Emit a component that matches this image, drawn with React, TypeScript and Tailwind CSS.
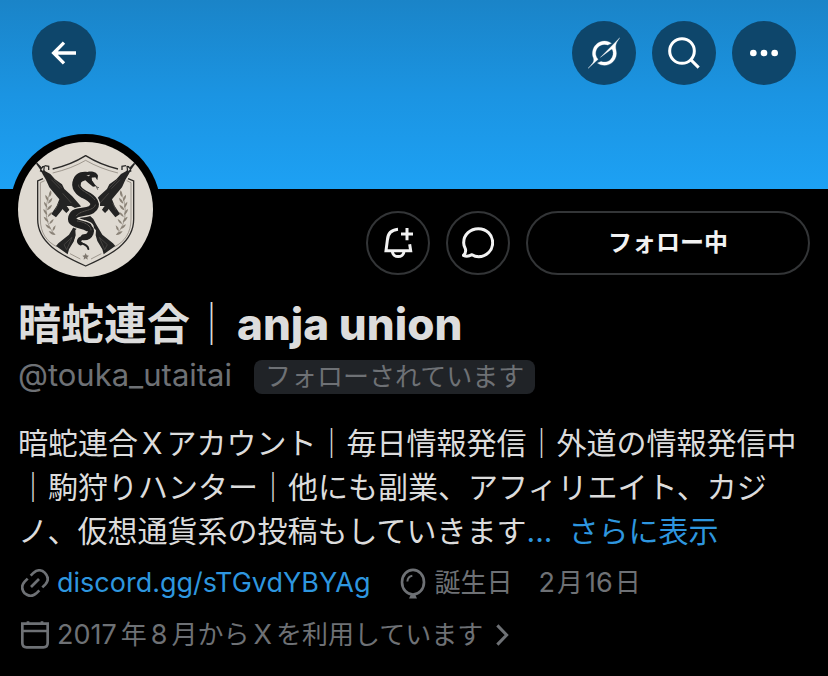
import type { ReactNode } from "react";

function Rifle() {
  return (
    <g fill="#242424">
      <path d="M75 97 L79 95 L106 124 L121 132 L135 148 L156 163 L163 177 L186 198 L213 229 L206 240 L184 228 L170 228 L178 239 L169 249 L158 237 L151 246 L138 262 L124 252 L140 228 L148 208 L133 190 L118 172 L107 148 L98 133 L93 122 Z" />
      <path d="M89 124 L97 108 L105 107 L102 130 Z" />
      <path d="M213 232 L250 267 L258 282 L277 314 L309 340 L316 348 L281 373 L277 358 L262 333 L257 316 L258 301 L243 284 L222 266 L205 246 Z" />
      <path d="M94 118 L101 111 L99 124 Z" fill="#dfdad2" />
      <path d="M160 239 L172 233 L175 241 L168 246 Z" fill="none" stroke="#242424" strokeWidth="2" />
      <path d="M124 149 L150 176 M131 148 L156 173 M158 190 L184 219 M146 219 L136 240 M268 322 L292 344 L284 359 Z" fill="none" stroke="#55524e" strokeWidth="2" />
    </g>
  );
}

function Laurel() {
  return (
    <g fill="#8b8378">
      <path d="M121 187 C101 230 104 282 135 314" fill="none" stroke="#8b8378" strokeWidth="2" />
      <path d="M122 181 Q128 191 119 201 Q114 192 122 181 Z" />
      <path d="M106 194 Q117 202 115 214 Q105 206 106 194 Z" />
      <path d="M127 203 Q126 216 114 221 Q115 209 127 203 Z" />
      <path d="M102 215 Q112 221 112 233 Q102 227 102 215 Z" />
      <path d="M126 224 Q124 236 111 241 Q112 229 126 224 Z" />
      <path d="M100 237 Q111 242 112 255 Q101 249 100 237 Z" />
      <path d="M127 246 Q124 257 113 262 Q114 250 127 246 Z" />
      <path d="M101 260 Q113 264 116 277 Q104 272 101 260 Z" />
      <path d="M131 267 Q129 278 118 283 Q119 272 131 267 Z" />
      <path d="M106 283 Q119 286 123 297 Q110 295 106 283 Z" />
      <path d="M137 286 Q137 297 128 304 Q126 292 137 286 Z" />
      <path d="M116 304 Q129 303 136 315 Q123 316 116 304 Z" />
    </g>
  );
}

function Emblem() {
  return (
    <svg viewBox="24 36 405 405" className="size-full" role="img" aria-label="暗蛇連合">
      <rect x="24" y="36" width="405" height="405" fill="#dfdad2" />
      <g fill="none" stroke="#2b2a29" strokeWidth="4">
        <path d="M128 117 Q182 105 227 77 Q272 105 324 117" />
        <path d="M116 120 L116 109 L104 107 M336 120 L336 109 L348 107" />
        <path d="M99 146 L83 153 L83 268 C83 338 150 374 227 408 C304 374 371 338 371 268 L371 153 L354 146" />
      </g>
      <g fill="none" stroke="#7d766d" strokeWidth="2">
        <path d="M128 129 Q184 116 227 91 Q270 116 324 129" />
        <path d="M104 152 L91 158 L91 267 C91 310 111 335 140 350 M350 152 L363 158 L363 267 C363 310 343 335 314 350 M180 371 L211 387 M274 371 L243 387" />
      </g>
      <Laurel />
      <g transform="translate(454 0) scale(-1 1)">
        <Laurel />
      </g>
      <Rifle />
      <g transform="translate(454 0) scale(-1 1)">
        <Rifle />
      </g>
      <g fill="none" strokeLinecap="round" strokeLinejoin="round">
        <path d="M228 289 C257 300 240 322 222 324 C200 328 198 340 212 343 C226 345 234 350 235 358" stroke="#dfdad2" strokeWidth="22" />
        <path d="M207 145 C189 165 200 181 222 193 C252 207 264 224 244 239 C223 251 195 240 187 262 C181 282 217 282 235 292" stroke="#dfdad2" strokeWidth="33" />
        <path d="M208 144 C190 164 201 181 222 193 C252 207 264 224 244 239 C223 251 195 240 187 262 C181 282 217 282 233 291" stroke="#202020" strokeWidth="25" />
        <path d="M230 288 C254 300 240 321 222 322" stroke="#202020" strokeWidth="18" />
        <path d="M224 322 C206 325 202 336 212 340" stroke="#202020" strokeWidth="12" />
        <path d="M212 340 C226 343 234 349 235 357" stroke="#202020" strokeWidth="6" />
        <path d="M205 164 C205 180 242 190 255 211 M256 225 C248 245 213 238 198 259 M202 273 C220 275 244 286 243 301" stroke="#77716a" strokeWidth="2" strokeDasharray="2 3" />
      </g>
      <path d="M190 151 C193 132 211 123 232 126 C246 122 261 127 264 137 L262 151 L256 142 L245 143 L246 151 L258 169 L249 170 L235 159 L226 151 L211 157 L202 168 L190 169 Z" fill="#202020" />
      <path d="M246 143 L253 145 L254 160 L247 151 Z" fill="#dfdad2" />
      <path d="M229 137 L240 134 L237 139 Z" fill="#dfdad2" />
      <path d="M249 163 C253 169 257 162 260 171 L267 173 M260 171 L263 179" fill="none" stroke="#202020" strokeWidth="2" />
      <path d="M227 369 L230 376 L237 377 L232 382 L233 389 L227 385 L221 389 L222 382 L217 377 L224 376 Z" fill="#7d766d" />
    </svg>
  );
}

function HeaderButton({ label, children }: { label: string; children: ReactNode }) {
  return (
    <button type="button" aria-label={label} className="flex size-16 items-center justify-center rounded-full bg-[#0e466b] text-white">
      {children}
    </button>
  );
}

function OutlineButton({ label, children }: { label: string; children: ReactNode }) {
  return (
    <button type="button" aria-label={label} className="flex size-16 shrink-0 items-center justify-center rounded-full border-2 border-[#333537] text-[#f2f2f2]">
      {children}
    </button>
  );
}

export default function App() {
  return (
    <main lang="ja" className="min-h-screen bg-black font-[Inter,'Noto_Sans_CJK_JP',sans-serif] text-[#dcdcdc]">
      <header className="flex h-[189px] items-start gap-4 bg-linear-to-b from-[#1a84c8] via-[#1b94e2] to-[#1da1f4] px-8 pt-[21px]">
        <HeaderButton label="戻る">
          <svg viewBox="0 0 96 96" className="size-8" fill="none" stroke="currentColor" strokeWidth="10">
            <path d="M84 48 H17 M48 17 L17 48 L48 79" />
          </svg>
        </HeaderButton>
        <div className="grow" />
        <HeaderButton label="Grok">
          <svg viewBox="0 0 33 32" className="size-8" fill="currentColor" stroke="currentColor" strokeWidth="0.3">
            <path d="M12.745 20.54l10.97-8.19c.539-.4 1.307-.244 1.564.38 1.349 3.288.746 7.241-1.938 9.955-2.683 2.714-6.417 3.31-9.83 1.954l-3.728 1.745c5.347 3.697 11.84 2.782 15.898-1.324 3.219-3.255 4.216-7.692 3.284-11.693l.008.009c-1.351-5.878.332-8.227 3.782-13.031L33 0l-4.54 4.59v-.014L12.743 20.544M10.48 22.531c-3.837-3.707-3.175-9.446.1-12.755 2.42-2.449 6.388-3.448 9.852-1.979l3.72-1.737c-.67-.49-1.53-1.017-2.515-1.387-4.455-1.854-9.789-.931-13.41 2.728-3.483 3.523-4.579 8.94-2.697 13.561 1.405 3.454-.899 5.898-3.22 8.364C1.389 30.2.564 31.074 0 32l10.478-9.466" />
          </svg>
        </HeaderButton>
        <HeaderButton label="検索">
          <svg viewBox="0 0 96 96" className="size-8" fill="none" stroke="currentColor" strokeWidth="9">
            <circle cx="42" cy="42" r="37" />
            <path d="M68 68 L92 92" />
          </svg>
        </HeaderButton>
        <HeaderButton label="その他">
          <svg viewBox="0 0 96 96" className="size-8" fill="currentColor">
            <circle cx="16" cy="48" r="10" />
            <circle cx="48" cy="48" r="10" />
            <circle cx="80" cy="48" r="10" />
          </svg>
        </HeaderButton>
      </header>

      <section className="px-[18px]">
        <div className="flex items-start justify-between">
          <div className="-mt-[55px] -ml-2 size-[151px] shrink-0 overflow-hidden rounded-full bg-black p-2">
            <div className="size-full overflow-hidden rounded-full">
              <Emblem />
            </div>
          </div>
          <div className="flex gap-4 pt-[22px]">
            <OutlineButton label="通知を追加">
              <svg viewBox="0 0 96 96" className="size-8 shrink-0" fill="none" stroke="currentColor" strokeWidth="9">
                <path d="M48 7 C26 9 17 22 16 40 L12 71 H86 L83 52" />
                <path d="M31 73 C33 94 64 94 66 73" />
                <path d="M75 3 V40 M57 21 H93" />
              </svg>
            </OutlineButton>
            <OutlineButton label="メッセージ">
              <svg viewBox="0 0 96 96" className="size-8 shrink-0" fill="none" stroke="currentColor" strokeWidth="9" strokeLinejoin="round">
                <path d="M49 5 C25 5 5 23 5 47 C5 54 7 60 10 65 C12 72 10 80 4 85 C12 89 23 87 30 83 C36 87 43 89 50 89 C74 89 92 70 92 47 C92 23 73 5 49 5 Z" />
              </svg>
            </OutlineButton>
            <button type="button" className="h-16 w-[284px] rounded-full border-2 border-[#333537] text-2xl font-bold text-[#f2f2f2]">
              フォロー中
            </button>
          </div>
        </div>

        <h1 className="mt-[15px] flex items-center text-[43px] leading-[48px] font-bold">
          暗蛇連合<span className="font-light">｜</span>
          <span className="ml-1 text-[44px] font-extrabold">anja union</span>
        </h1>
        <div className="mt-3 flex items-start gap-[22px] text-[#6e7175]">
          <span className="text-[31px] leading-[30px]">@touka_utaitai</span>
          <span className="rounded-lg bg-[#202327] px-[11px] text-[26px] leading-[34px]">フォローされています</span>
        </div>

        <p className="mt-[27px] text-[30px] leading-[44px]">
          暗蛇連合<span className="mx-1">X</span>アカウント｜毎日情報発信｜外道の情報発信中｜駒狩りハンター｜他にも副業、アフィリエイト、カジノ、仮想通貨系の投稿もしていきます
          <a href="#more" className="text-[#2e96df]">
            ...<span className="ml-4">さらに表示</span>
          </a>
        </p>

        <div className="mt-3 flex items-center text-[26px] leading-9 text-[#6e7175]">
          <svg viewBox="0 0 84 84" className="ml-[3px] size-7 shrink-0" fill="none" stroke="currentColor" strokeWidth="8" aria-hidden="true">
            <path d="M30 54 L54 30" />
            <path d="M29 20 L38 11 C49 1 62 2 71 11 C82 22 83 35 73 46 L64 55" />
            <path d="M20 29 L11 38 C1 49 2 62 11 73 C22 82 35 83 46 73 L55 64" />
          </svg>
          <a href="#discord" className="ml-2 text-[27px] text-[#2e96df]">discord.gg/sTGvdYBYAg</a>
          <svg viewBox="0 0 84 92" className="ml-7 h-[31px] w-7 shrink-0" fill="none" stroke="currentColor" strokeWidth="8" aria-hidden="true">
            <ellipse cx="42" cy="42" rx="33" ry="37" />
            <path d="M25 40 C26 30 31 24 40 23" strokeWidth="6" />
            <path d="M36 78 H48 L54 91 H30 Z" fill="currentColor" stroke="none" />
          </svg>
          <span className="ml-2">
            誕生日　<span className="text-[27px]">2</span><span className="mx-0.5">月</span><span className="text-[27px]">16</span><span className="ml-0.5">日</span>
          </span>
        </div>
        <div className="mt-4 flex items-center text-[26px] leading-9 text-[#6e7175]">
          <svg viewBox="0 0 84 84" className="ml-[3px] size-7 shrink-0" fill="none" stroke="currentColor" strokeWidth="8" aria-hidden="true">
            <path d="M4 8 H80 V66 Q80 79 67 79 H17 Q4 79 4 66 Z M4 30 H80 M21 1 V10 M63 1 V10" />
          </svg>
          <a href="#joined" className="ml-2 flex items-center">
            <span>
              <span className="text-[27px]">2017</span><span className="mx-1">年</span><span className="text-[27px]">8</span><span className="ml-1">月から</span><span className="mx-1 text-[27px]">X</span>を利用しています
            </span>
            <svg viewBox="0 0 42 66" className="ml-3 h-[22px] w-3.5" fill="none" stroke="currentColor" strokeWidth="9" aria-hidden="true">
              <path d="M7 4 L35 33 L7 62" />
            </svg>
          </a>
        </div>
      </section>
    </main>
  );
}
